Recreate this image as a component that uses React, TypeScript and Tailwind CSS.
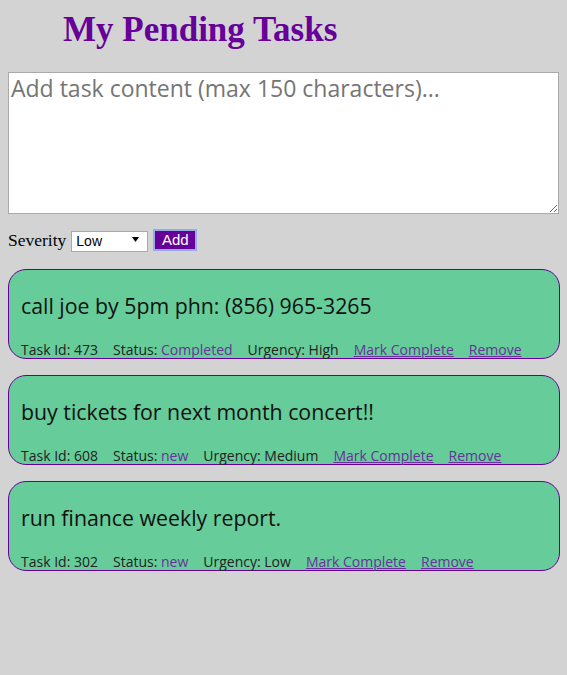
import React from "react";

type Task = { id: number; text: string; status: string; urgency: string };

const tasks: Task[] = [
  { id: 473, text: "call joe by 5pm phn: (856) 965-3265", status: "Completed", urgency: "High" },
  { id: 608, text: "buy tickets for next month concert!!", status: "new", urgency: "Medium" },
  { id: 302, text: "run finance weekly report.", status: "new", urgency: "Low" },
];

function TaskCard({ t }: { t: Task }) {
  return (
    <div className="mb-[16px] w-[552px] rounded-[18px] border border-[#660099] bg-[#66cc99] pl-[12px] pr-[12px] pt-[22px] text-[#111]">
      <p className="text-[21.3px] leading-[28px] font-['Open_Sans',sans-serif]">{t.text}</p>
      <div className="mt-[22px] flex h-[16px] items-center gap-[15px] text-[14px] leading-[16px] text-[#222] font-['Open_Sans',sans-serif]">
        <span>Task Id: {t.id}</span>
        <span>
          Status: <span className="text-[#663399]">{t.status}</span>
        </span>
        <span>Urgency: {t.urgency}</span>
        <a href="#" className="text-[#663399] underline">Mark Complete</a>
        <a href="#" className="text-[#663399] underline">Remove</a>
      </div>
    </div>
  );
}

export default function App() {
  return (
    <div className="min-h-[675px] bg-[#d3d3d3] px-[8px]">
      <h1 className="pl-[55px] pt-[12px] text-[35px] font-bold leading-[35px] text-[#660099] font-['Liberation_Serif',serif]">
        My Pending Tasks
      </h1>
      <textarea
        className="mt-[25px] block h-[142px] w-[551px] resize-y border border-[#a9a9a9] bg-white px-[2px] py-[1px] text-[23px] leading-[28px] text-black placeholder:text-[#757575] font-['Open_Sans',sans-serif] outline-none"
        placeholder="Add task content (max 150 characters)..."
      />
      <div className="mt-[15px] flex items-center gap-[5px] font-['Liberation_Serif',serif] text-[17.5px] leading-[22px] text-black">
        <span>Severity</span>
        <div className="relative -mt-[2px] h-[21px] w-[77px]">
          <select className="h-[21px] w-[77px] appearance-none border border-[#a9a9a9] bg-white pl-[4px] text-[14px] leading-[19px] text-black font-['Liberation_Sans',sans-serif] outline-none">
            <option>Low</option>
            <option>Medium</option>
            <option>High</option>
          </select>
          <svg className="pointer-events-none absolute right-[9px] top-[8px]" width="7" height="5" viewBox="0 0 7 5">
            <path d="M0 0 L7 0 L3.5 5 Z" fill="#000" />
          </svg>
        </div>
        <button className="flex h-[22px] w-[44px] items-center justify-center border-2 border-[#97ace6] bg-[#660099] text-[15px] leading-[18px] text-white font-['Liberation_Sans',sans-serif]">
          Add
        </button>
      </div>
      <div className="mt-[18px]">
        {tasks.map((t) => (
          <TaskCard key={t.id} t={t} />
        ))}
      </div>
    </div>
  );
}
